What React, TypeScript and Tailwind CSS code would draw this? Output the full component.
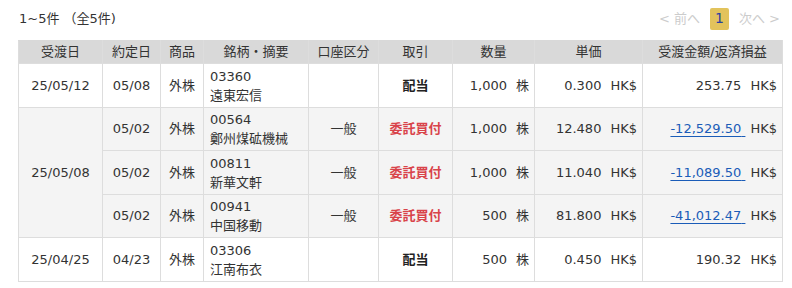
import React from "react";

type Row = {
  date?: string;
  span?: number;
  yaku: string;
  code: string;
  name: string;
  account: string;
  kind: "div" | "buy";
  qty: string;
  price: string;
  amount: string;
  link?: boolean;
  gray?: boolean;
  h: string;
};

const rows: Row[] = [
  { date: "25/05/12", span: 1, yaku: "05/08", code: "03360", name: "遠東宏信", account: "", kind: "div", qty: "1,000", price: "0.300", amount: "253.75", h: "h-[44px]" },
  { date: "25/05/08", span: 3, yaku: "05/02", code: "00564", name: "鄭州煤砿機械", account: "一般", kind: "buy", qty: "1,000", price: "12.480", amount: "-12,529.50", link: true, gray: true, h: "h-[43px]" },
  { yaku: "05/02", code: "00811", name: "新華文軒", account: "一般", kind: "buy", qty: "1,000", price: "11.040", amount: "-11,089.50", link: true, gray: true, h: "h-[44px]" },
  { yaku: "05/02", code: "00941", name: "中国移動", account: "一般", kind: "buy", qty: "500", price: "81.800", amount: "-41,012.47", link: true, gray: true, h: "h-[43px]" },
  { date: "25/04/25", span: 1, yaku: "04/23", code: "03306", name: "江南布衣", account: "", kind: "div", qty: "500", price: "0.450", amount: "190.32", h: "h-[44px]" },
];

const font = { fontFamily: '"DejaVu Sans", "Noto Sans CJK JP", sans-serif' };

export default function App() {
  const td = "border border-[#dddddd] text-[13px]";
  return (
    <div className="w-[792px] h-[288px] bg-white text-[#333333] pl-[18px] pr-[11px]" style={font}>
      <div className="flex items-center justify-between h-[40px]">
        <span className="text-[13px] pl-[1px] -mt-[3px]">1~5件 （全5件)</span>
        <div className="flex items-center gap-[10px] text-[13px] -mt-[3px] pr-[1px]">
          <span className="text-[#cccccc]">&lt; 前へ</span>
          <span className="w-[19px] h-[22px] rounded-[2px] bg-[#e2c35c] text-[#2a3fa0] flex items-center justify-center text-[14px]">1</span>
          <span className="text-[#cccccc]">次へ &gt;</span>
        </div>
      </div>
      <table className="border-collapse w-[764px] table-fixed">
        <colgroup>
          <col className="w-[84px]" />
          <col className="w-[58px]" />
          <col className="w-[43px]" />
          <col className="w-[105px]" />
          <col className="w-[70px]" />
          <col className="w-[74px]" />
          <col className="w-[82px]" />
          <col className="w-[108px]" />
          <col className="w-[140px]" />
        </colgroup>
        <thead>
          <tr className="bg-[#d9d9d9] h-[23px]">
            {["受渡日", "約定日", "商品", "銘柄・摘要", "口座区分", "取引", "数量", "単価", "受渡金額/返済損益"].map((h) => (
              <th key={h} className="border border-[#dddddd] border-t-[#d9d9d9] text-[13px] font-normal text-center p-0">
                {h}
              </th>
            ))}
          </tr>
        </thead>
        <tbody>
          {rows.map((r, i) => (
            <tr key={i} className={`${r.h} ${r.gray ? "bg-[#f4f4f4]" : "bg-white"}`}>
              {r.date && (
                <td rowSpan={r.span} className={`${td} text-center`}>
                  {r.date}
                </td>
              )}
              <td className={`${td} text-center`}>{r.yaku}</td>
              <td className={`${td} text-center`}>外株</td>
              <td className={`${td} pl-[6px] leading-[19px]`}>
                <div>{r.code}</div>
                <div>{r.name}</div>
              </td>
              <td className={`${td} text-center`}>{r.account}</td>
              <td className={`${td} text-center font-bold ${r.kind === "buy" ? "text-[#d9434a]" : "text-[#222222]"}`}>
                {r.kind === "buy" ? "委託買付" : "配当"}
              </td>
              <td className={`${td} text-right pr-[5px]`}>
                {r.qty}
                <span className="ml-[9px]">株</span>
              </td>
              <td className={`${td} text-right pr-[5px]`}>
                {r.price}
                <span className="ml-[9px]">HK$</span>
              </td>
              <td className={`${td} text-right pr-[5px]`}>
                {r.link ? (
                  <a href="#" className="text-[#1a5cb8] underline underline-offset-[3px]">
                    {r.amount}&nbsp;
                  </a>
                ) : (
                  <span>{r.amount}&nbsp;</span>
                )}
                <span className="ml-[5px]">HK$</span>
              </td>
            </tr>
          ))}
        </tbody>
      </table>
    </div>
  );
}
